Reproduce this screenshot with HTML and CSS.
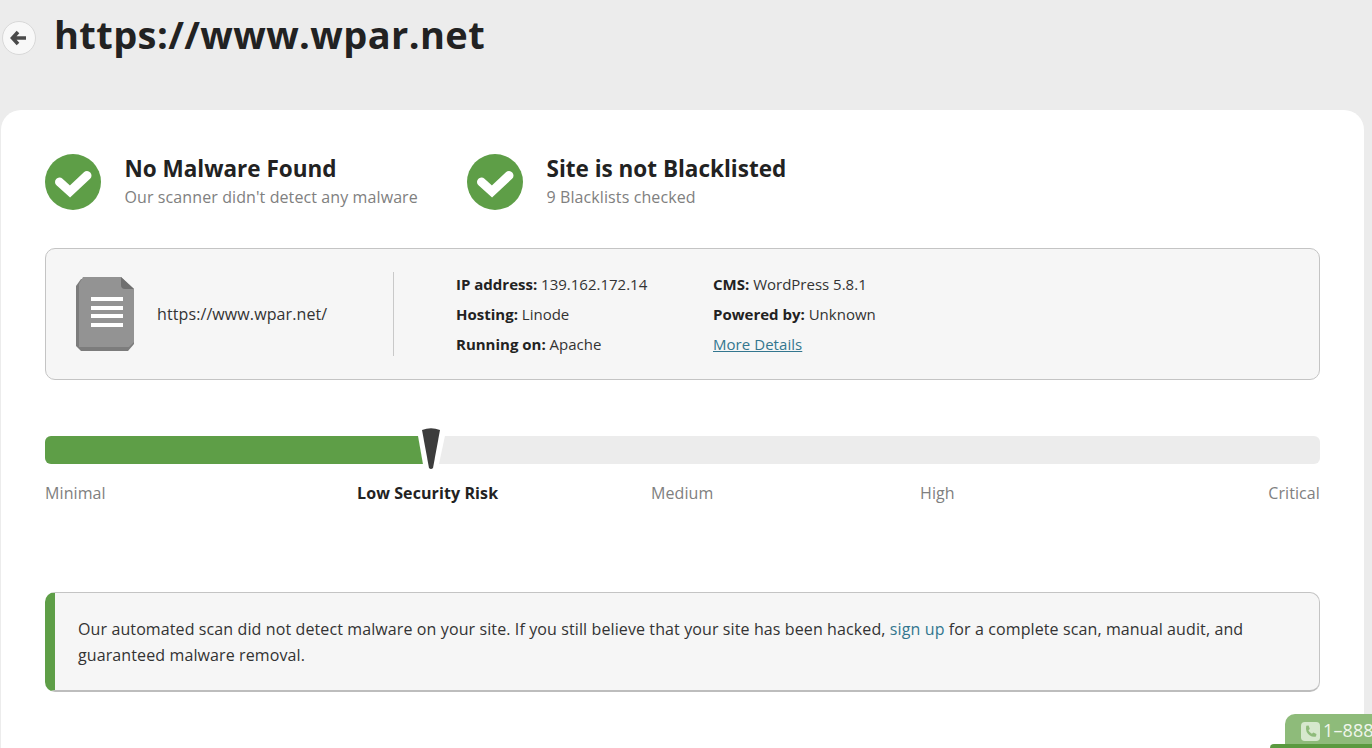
FILE: index.html
```html
<!DOCTYPE html>
<html lang="en">
<head>
<meta charset="utf-8">
<title>https://www.wpar.net</title>
<link rel="stylesheet" href="styles.css">
</head>
<body>
<header class="top">
  <a class="back" href="#"><svg width="18" height="16" viewBox="0 0 18 16"><path d="M8 2 L2.500 8 L8 14 M3 8 H16" fill="none" stroke="#4a4a4a" stroke-width="3.6" stroke-linejoin="miter"/></svg></a>
  <h1>https://www.wpar.net</h1>
</header>
<main class="card">
  <section class="status">
    <div class="stat stat-a">
      <svg class="check" viewBox="0 0 56 56"><circle cx="28" cy="28" r="28" fill="#5e9e47"/><path d="M14.500 28 L25 37.500 L42 21.500" fill="none" stroke="#fff" stroke-width="9" stroke-linecap="round" stroke-linejoin="miter"/></svg>
      <div><h2>No Malware Found</h2><p>Our scanner didn't detect any malware</p></div>
    </div>
    <div class="stat">
      <svg class="check" viewBox="0 0 56 56"><circle cx="28" cy="28" r="28" fill="#5e9e47"/><path d="M14.500 28 L25 37.500 L42 21.500" fill="none" stroke="#fff" stroke-width="9" stroke-linecap="round" stroke-linejoin="miter"/></svg>
      <div><h2>Site is not Blacklisted</h2><p>9 Blacklists checked</p></div>
    </div>
  </section>
  <section class="info">
    <div class="site">
      <svg class="doc" width="60" height="76" viewBox="0 0 60 76">
        <path d="M0 10 L5 3 H45 L58 14 V68 L52 75 H5 L0 70 Z" fill="#7c7c7c"/>
        <path d="M3 8 L7 1 H45 L58 13 V66 L53 71 H3 Z" fill="#939393"/>
        <path d="M45 1 L58 13 H49 Q45 13 45 9 Z" fill="#6f6f6f"/>
        <path d="M15 21 H47 V25 H15 Z M15 30 H47 V34 H15 Z M15 38 H47 V42 H15 Z M15 47 H47 V51 H15 Z" fill="#fff"/>
      </svg>
      <span class="url">https://www.wpar.net/</span>
    </div>
    <div class="col col-a">
      <p><b>IP address:</b> 139.162.172.14</p>
      <p><b>Hosting:</b> Linode</p>
      <p><b>Running on:</b> Apache</p>
    </div>
    <div class="col">
      <p><b>CMS:</b> WordPress 5.8.1</p>
      <p><b>Powered by:</b> Unknown</p>
      <p><a class="details" href="#">More Details</a></p>
    </div>
  </section>
  <section class="risk">
    <div class="track">
      <div class="fill"></div>
      <svg class="needle" width="30" height="46" viewBox="0 0 30 46"><path d="M0.300 6 L3 1 H26 L28.800 6 L20.700 44 H7 Z" fill="#fff"/><path d="M5 4 Q14 0.500 23 4 L16 42 Q14 44 12 42 Z" fill="#3c3c3c"/></svg>
    </div>
    <div class="labels">
      <span class="lab-min">Minimal</span>
      <b class="lab-low">Low Security Risk</b>
      <span class="lab-med">Medium</span>
      <span class="lab-high">High</span>
      <span class="lab-crit">Critical</span>
    </div>
  </section>
  <section class="note">
    <p>Our automated scan did not detect malware on your site. If you still believe that your site has been hacked, <a href="#">sign up</a> for a complete scan, manual audit, and guaranteed malware removal.</p>
  </section>
</main>
<div class="phone">
  <div class="phone-tab"><svg width="19" height="19" viewBox="0 0 20 20"><rect width="20" height="20" rx="4" fill="#d6e8cd"/><path d="M5.500 4 L8 3.800 L9.300 7.300 L7.800 8.600 Q8.800 11 11.500 12.400 L13 11 L16.300 12.600 L15.800 15.300 Q9.500 16.500 6 10.500 Q4.700 7.500 5.500 4 Z" fill="#8ebb7a"/></svg><span>1–888</span></div>
  <div class="phone-bar"></div>
</div>
</body>
</html>
```
FILE: styles.css
```css
html, body { margin: 0; padding: 0; height: 748px; overflow: hidden; }
body { background: #ececec; font-family: "Open Sans", sans-serif; color: #222; position: relative; letter-spacing: 0.1px; }
.top { height: 110px; display: flex; align-items: flex-start; padding-left: 2px; box-sizing: border-box; }
.back { width: 32px; height: 32px; margin-top: 21px; border-radius: 50%; background: #f8f8f8; border: 1px solid #d8d8d8; display: flex; align-items: center; justify-content: center; }
h1 { margin: 9px 0 0 18px; font-size: 38px; line-height: 50px; font-weight: 700; color: #222; letter-spacing: 0.4px; }
.card { margin-left: 1px; width: 1363px; height: 638px; box-sizing: border-box; background: #fff; border-radius: 20px 20px 0 0; padding: 44px 44px 0; }
.status { display: flex; height: 56px; }
.stat { display: flex; gap: 23.5px; }
.stat-a { width: 422px; }
.check { width: 56px; height: 56px; flex: none; }
h2 { margin: 0; font-size: 22.500px; line-height: 30px; font-weight: 700; color: #222; letter-spacing: 0; }
.stat p { margin: 0; font-size: 16px; line-height: 26px; color: #808080; }
.info { margin-top: 38px; height: 132px; box-sizing: border-box; background: #f6f6f6; border: 1px solid #c4c4c4; border-radius: 10px; display: flex; align-items: center; font-size: 15px; letter-spacing: 0; }
.site { width: 317px; height: 84px; margin-left: 30px; display: flex; align-items: center; border-right: 1px solid #c9c9c9; gap: 21px; flex: none; }
.doc { flex: none; }
.url { font-size: 16px; color: #333; letter-spacing: 0.1px; }
.col { display: flex; flex-direction: column; gap: 8px; }
.col p { margin: 0; line-height: 22px; color: #333; }
.col b { font-weight: 700; color: #222; }
.col-a { margin-left: 62px; width: 257px; }
.details { color: #33768f; letter-spacing: 0.05px; }
.risk { margin-top: 56px; }
.track { position: relative; height: 28px; background: #ececec; border-radius: 6px; }
.fill { width: 380px; height: 28px; background: #5e9e47; border-radius: 6px 0 0 6px; }
.needle { position: absolute; left: 372px; top: -10px; }
.labels { position: relative; height: 24px; margin-top: 17px; font-size: 16px; line-height: 24px; color: #808080; }
.labels > * { position: absolute; top: 0; white-space: nowrap; }
.lab-min { left: 0; }
.lab-low { left: 312px; color: #222; font-weight: 700; }
.lab-med { left: 606px; }
.lab-high { left: 875px; }
.lab-crit { right: 0; }
.note { margin-top: 87px; height: 100px; box-sizing: border-box; background: #f6f6f6; border: 1px solid #c4c4c4; border-left: 10px solid #5e9e47; border-bottom: 2px solid #bdbdbd; border-radius: 10px; padding: 23px 24px 0 23px; }
.note p { margin: 0; font-size: 16px; line-height: 26px; color: #333; letter-spacing: 0.11px; }
.note a { color: #33768f; text-decoration: none; }
.phone { position: absolute; right: 0; bottom: 0; width: 102px; height: 34px; overflow: hidden; }
.phone-tab { position: absolute; left: 15px; top: 0; right: 0; height: 34px; box-sizing: border-box; background: #8ebb7a; border-radius: 10px 0 0 0; color: #f0f6ec; font-size: 18px; display: flex; padding: 7px 0 0 16px; gap: 3px; align-items: flex-start; white-space: nowrap; }
.phone-tab svg { flex: none; margin-top: 1px; }
.phone-tab span { line-height: 18px; }
.phone-bar { position: absolute; left: 0; right: 0; top: 30px; height: 4px; background: #5a9a3f; border-radius: 6px 0 0 0; }
```
